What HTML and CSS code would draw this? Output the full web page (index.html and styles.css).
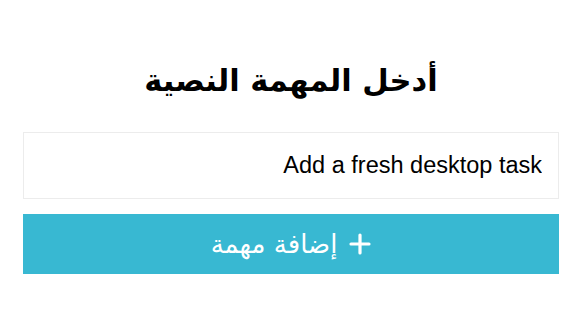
FILE: index.html
```html
<!DOCTYPE html>
<html lang="ar" dir="rtl">
<head>
    <meta charset="UTF-8">
    <title>المهام</title>
    <link rel="stylesheet" href="styles.css">
</head>
<body>
    <div class="container">
        <h1 class="title">أدخل المهمة النصية</h1>
        <input type="text" class="task-input" value="Add a fresh desktop task" />
        <button class="add-btn">
            <svg class="plus-icon" width="22" height="22" viewBox="0 0 22 22">
                <path d="M11 2v18M2 11h18" stroke="#fff" stroke-width="3.2" stroke-linecap="round" fill="none"/>
            </svg>
            <span>إضافة مهمة</span>
        </button>
    </div>
</body>
</html>
```

FILE: styles.css
```css
body {
    margin: 0;
    background-color: #fff;
    font-family: "DejaVu Sans", sans-serif;
}
.container {
    padding: 60px 23px 20px;
    display: flex;
    flex-direction: column;
}
.title {
    margin: 0 0 30px;
    text-align: center;
    font-size: 30.5px;
    font-weight: bold;
    color: #000;
    line-height: 42px;
}
.task-input {
    height: 67px;
    box-sizing: border-box;
    padding: 0 16px;
    border: 1px solid #ececec;
    font-family: "Liberation Sans", Arial, sans-serif;
    font-size: 23.5px;
    color: #000;
    direction: rtl;
    margin-bottom: 15px;
    outline: none;
}
.add-btn {
    height: 60px;
    border: none;
    background-color: #38b8d2;
    color: #fff;
    font-family: "DejaVu Sans", sans-serif;
    font-size: 26px;
    display: flex;
    align-items: center;
    justify-content: center;
    gap: 12px;
    cursor: pointer;
}
```
